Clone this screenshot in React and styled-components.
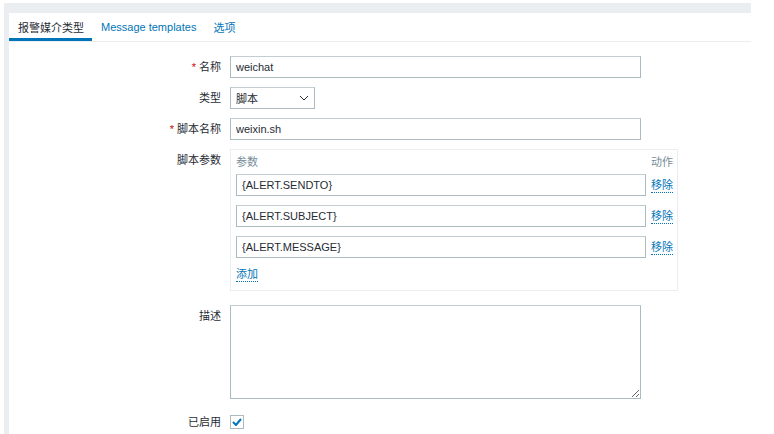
import React from "react";
import styled, {createGlobalStyle} from "styled-components";

const GlobalStyle = createGlobalStyle`
  html, body {
    margin: 0;
    padding: 0;
    background: #ffffff;
  }
  body {
    font-family: "Liberation Sans", Arial, "Noto Sans CJK SC", sans-serif;
    font-size: 11px;
    color: #1f2c33;
  }
`;

const Frame = styled.div`
  margin: 3px 23px 0 4px;
  padding: 10px 0 0 5px;
  background: #ebeef0;
  height: 431px;
  box-sizing: border-box;
  display: flex;
  overflow: hidden;
`;

const Panel = styled.div`
  flex: 1;
  background: #ffffff;
  display: flex;
  flex-direction: column;
`;

const TabBar = styled.div`
  display: flex;
  height: 28px;
  flex-shrink: 0;
  border-bottom: 1px solid #ebeef0;
`;

const Tab = styled.div`
  padding: 3px 8px 0 9px;
  display: flex;
  align-items: center;
  box-sizing: border-box;
  white-space: nowrap;
  color: ${p => p.$active ? "#1f2c33" : "#0275b8"};
  border-bottom: 3px solid ${p => p.$active ? "#0275b8" : "transparent"};
`;

const Form = styled.div`
  padding-top: 14px;
  display: flex;
  flex-direction: column;
`;

const Row = styled.div`
  display: flex;
  align-items: flex-start;
  flex-shrink: 0;
  margin-top: ${p => p.$gap ?? 9}px;
`;

const Label = styled.div`
  width: 221px;
  padding-right: 9px;
  box-sizing: border-box;
  text-align: right;
  line-height: 22px;
  white-space: nowrap;
  color: #1f2c33;
  flex-shrink: 0;
`;

const Required = styled.span`
  color: #d40000;
  margin-right: 3px;
`;

const TextInput = styled.input`
  width: ${p => p.$width || 411}px;
  height: 22px;
  flex-shrink: 0;
  box-sizing: border-box;
  border: 1px solid #acbbc2;
  border-top-color: #c3ced3;
  padding: 0 5px;
  font-family: inherit;
  font-size: 11px;
  color: #1f2c33;
  background: #ffffff;
  outline: none;
  margin: 0;
`;

const Select = styled.div`
  width: 85px;
  height: 22px;
  box-sizing: border-box;
  border: 1px solid #acbbc2;
  border-top-color: #c3ced3;
  padding: 0 5px;
  display: flex;
  align-items: center;
  justify-content: space-between;
`;

const ParamBox = styled.div`
  width: 448px;
  flex-shrink: 0;
  box-sizing: border-box;
  border: 1px solid #ebeef0;
  padding: 4px 4px 8px 5px;
  display: flex;
  flex-direction: column;
`;

const ParamHeader = styled.div`
  display: flex;
  justify-content: space-between;
  line-height: 16px;
  color: #768d99;
  padding-bottom: 4px;
`;

const ParamRow = styled.div`
  display: flex;
  align-items: center;
  gap: 5px;
  margin-bottom: 9px;
`;

const Link = styled.span`
  color: #0275b8;
  border-bottom: 1px dotted #0275b8;
  line-height: 14px;
  white-space: nowrap;
  flex-shrink: 0;
  align-self: ${p => p.$start ? "flex-start" : "center"};
`;

const TextArea = styled.textarea`
  width: 411px;
  height: 94px;
  flex-shrink: 0;
  box-sizing: border-box;
  border: 1px solid #acbbc2;
  border-top-color: #c3ced3;
  margin: 0;
  padding: 4px 5px;
  font-family: inherit;
  font-size: 11px;
  resize: both;
  outline: none;
`;

const CheckBox = styled.span`
  width: 14px;
  height: 14px;
  box-sizing: border-box;
  border: 1px solid #acbbc2;
  display: flex;
  align-items: center;
  justify-content: center;
  margin-top: 4px;
`;

const params = ["{ALERT.SENDTO}", "{ALERT.SUBJECT}", "{ALERT.MESSAGE}"];

export default function App() {
  return (
    <>
      <GlobalStyle/>
      <Frame>
        <Panel>
          <TabBar>
            <Tab $active>报警媒介类型</Tab>
            <Tab>Message templates</Tab>
            <Tab>选项</Tab>
          </TabBar>
          <Form>
            <Row $gap={0}>
              <Label><Required>*</Required>名称</Label>
              <TextInput defaultValue="weichat"/>
            </Row>
            <Row>
              <Label>类型</Label>
              <Select>
                <span>脚本</span>
                <svg width="10" height="6" viewBox="0 0 10 6">
                  <path d="M1 1 L5 5 L9 1" fill="none" stroke="#1f2c33" strokeWidth="1"/>
                </svg>
              </Select>
            </Row>
            <Row>
              <Label><Required>*</Required>脚本名称</Label>
              <TextInput defaultValue="weixin.sh"/>
            </Row>
            <Row>
              <Label>脚本参数</Label>
              <ParamBox>
                <ParamHeader>
                  <span>参数</span>
                  <span>动作</span>
                </ParamHeader>
                {params.map(p => (
                  <ParamRow key={p}>
                    <TextInput $width={410} defaultValue={p}/>
                    <Link>移除</Link>
                  </ParamRow>
                ))}
                <Link $start>添加</Link>
              </ParamBox>
            </Row>
            <Row $gap={14}>
              <Label>描述</Label>
              <TextArea/>
            </Row>
            <Row $gap={12}>
              <Label>已启用</Label>
              <CheckBox>
                <svg width="10" height="8" viewBox="0 0 10 8">
                  <path d="M1 4 L4 7 L9 1" fill="none" stroke="#0275b8" strokeWidth="2"/>
                </svg>
              </CheckBox>
            </Row>
          </Form>
        </Panel>
      </Frame>
    </>
  );
}
